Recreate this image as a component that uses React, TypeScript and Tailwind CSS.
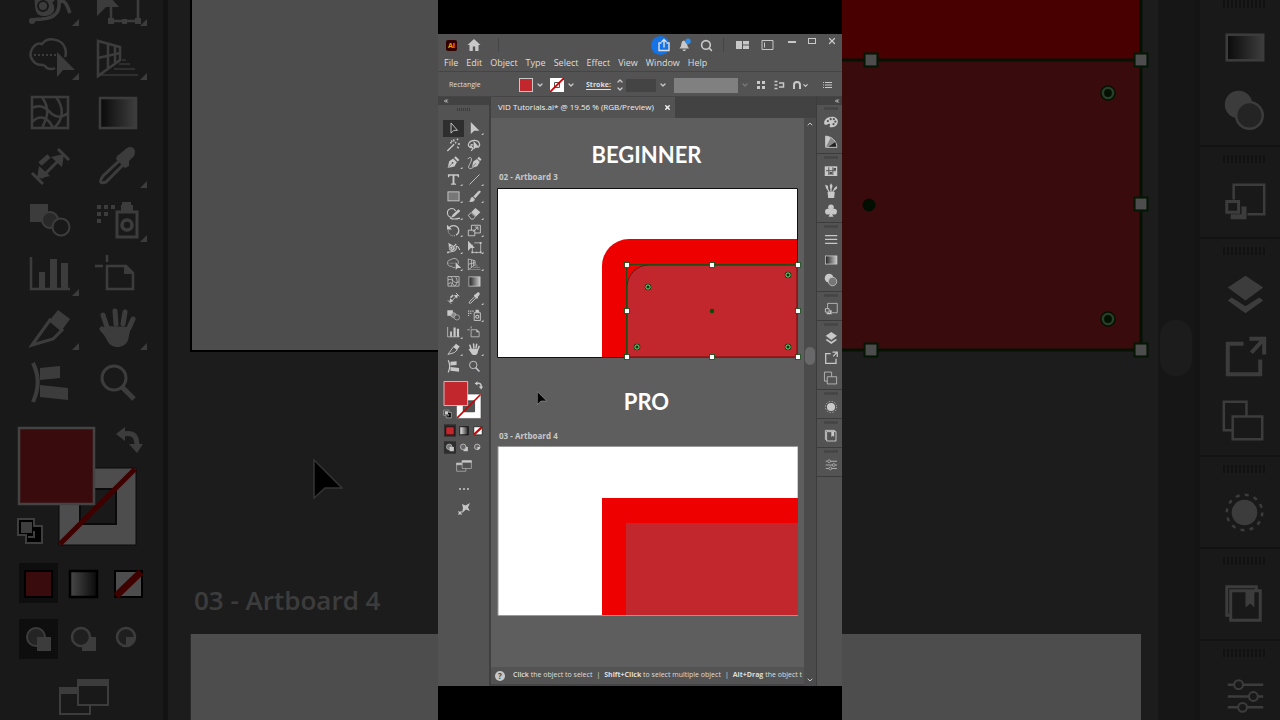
import React, { useId } from "react";
import { ChevronDown, ChevronUp, ChevronsLeft, Search, X } from "lucide-react";
import clsx from "clsx";

type Tool = { name: string; art: React.ReactNode; flyout?: boolean };

const solid = { fill: "currentColor", stroke: "none" };

const GradientRect = ({ x, y, w, h, flip }: { x: number; y: number; w: number; h: number; flip?: boolean }) => {
  const id = useId();
  return (
    <>
      <defs>
        <linearGradient id={id}>
          <stop offset="0" stopColor={flip ? "#eee" : "#222"} />
          <stop offset="1" stopColor={flip ? "#222" : "#ccc"} />
        </linearGradient>
      </defs>
      <rect x={x} y={y} width={w} height={h} fill={`url(#${id})`} stroke={flip ? "#000" : "currentColor"} strokeWidth="2.5" />
    </>
  );
};

const topTools: Tool[] = [
  { name: "Selection", art: <path d="M26 9v33l9-9h12z" strokeWidth="3" /> },
  { name: "Direct Selection", art: <path d="M22 6v39l11-11h17z" {...solid} />, flyout: true },
  { name: "Magic Wand", art: <path d="M14 45l22-22M39 20l4-4M35 7v7M48 22h7M45 9l4-4M27 10l3 5M46 31l5 5M23 18h5" strokeWidth="4.5" /> },
  {
    name: "Lasso",
    art: (
      <>
        <path d="M29 34c-13 1-18-7-13-15 7-11 28-12 33-1 3 5 1 10-2 13M29 26c-7-5-9 3-4 6 5 2 5 7-2 12" strokeWidth="4" />
        <path d="M31 12v29l7-7h12z" {...solid} />
      </>
    ),
  },
  {
    name: "Pen",
    art: (
      <>
        <path d="M15 45l5-22 13-9 12 12-8 14zM36 12l5-5 12 12-5 5z" {...solid} />
        <path d="M16 44l14-14" stroke="#535353" strokeWidth="2" />
        <circle cx="31" cy="28" r="3" fill="#535353" stroke="none" />
      </>
    ),
    flyout: true,
  },
  {
    name: "Curvature",
    art: (
      <>
        <path d="M25 45l5-21 12-8 9 9-8 14zM43 14l5-6 9 9-5 5z" {...solid} />
        <path d="M12 16c8-10 15-5 11 7-4 10-12 20-6 23 5 2 9-1 13-3" strokeWidth="3" />
        <path d="M26 44l13-15" stroke="#535353" />
      </>
    ),
  },
  { name: "Type", art: <path d="M16 10h36v10h-3l-3-5h-9v24l5 2v3H26v-3l5-2V15h-9l-3 5h-3z" {...solid} />, flyout: true },
  { name: "Line Segment", art: <path d="M18 43L50 11" strokeWidth="3" />, flyout: true },
  { name: "Rectangle", art: <rect x="16" y="12" width="36" height="29" fill="#777" strokeWidth="3" />, flyout: true },
  { name: "Paintbrush", art: <path d="M51 8c4 0 4 4 1 7L37 33l-7-6L46 10c2-2 3-2 5-2zM28 29l7 6c0 8-9 12-21 8 6-1 6-4 7-8 1-4 4-6 7-6z" {...solid} />, flyout: true },
  {
    name: "Shaper",
    art: (
      <>
        <path d="M41 19A14 14 0 1 0 28 39M23 42c12 5 25 2 32 0" strokeWidth="3.5" />
        <path d="M27 41l4-10 19-18 6 6-19 18z" {...solid} />
      </>
    ),
    flyout: true,
  },
  {
    name: "Eraser",
    art: (
      <>
        <path d="M14 33l9-9 14 14-7 7h-7z" strokeWidth="3" />
        <path d="M24 22L37 9l16 14-14 14z" {...solid} />
      </>
    ),
    flyout: true,
  },
  {
    name: "Rotate",
    art: (
      <>
        <path d="M20 18c10-12 31-7 31 10 0 7-4 12-9 14" strokeWidth="4" />
        <path d="M38 44c-10 2-21-4-21-17" strokeWidth="3" strokeDasharray="3 4" />
        <path d="M13 8v16h16z" {...solid} />
      </>
    ),
    flyout: true,
  },
  { name: "Scale", art: <path d="M14 26h21v18H14zM24 26V10h29v25H35M29 31l16-15M36 16h9v9" strokeWidth="3" />, flyout: true },
];

const lowerTools: Tool[] = [
  {
    name: "Width",
    art: (
      <>
        <path d="M14 43c5-2 8-2 12-2 15-1 18-9 17-18 8-1 8 6 11 12M27 32l16-17" strokeWidth="3.5" />
        <path d="M17 12l14 8c10 6 10 17-2 18-14 1-8-14-12-26z" {...solid} />
        <circle cx="27" cy="28" r="5" stroke="#535353" />
        <circle cx="16" cy="43" r="3" {...solid} />
      </>
    ),
    flyout: true,
  },
  {
    name: "Free Transform",
    art: (
      <>
        <path d="M27 18v25h27V12H33" strokeWidth="2.5" />
        <path d="M13 5v33l9-9h13zM24 40h6v6h-6zM51 40h6v6h-6zM51 9h6v6h-6zM38 41h5v5h-5z" {...solid} />
      </>
    ),
    flyout: true,
  },
  {
    name: "Shape Builder",
    art: (
      <>
        <path d="M28 33c-11 1-16-9-12-16 3-5 7-6 10-5 6-8 20-5 23 4 1 3 1 7 0 9M28 33c3 4 7 5 11 3" strokeWidth="2.5" />
        <path d="M18 23h24" strokeDasharray="2 2" />
        <path d="M41 20v25l6-7h12z" {...solid} />
      </>
    ),
    flyout: true,
  },
  {
    name: "Perspective Grid",
    art: (
      <>
        <path d="M14 9v35l22-16V15zM24 12v25M31 14v18M14 26l22-5" strokeWidth="2.5" />
        <path d="M14 43h40M30 37h21M35 32h11M38 28h4" opacity=".6" />
      </>
    ),
    flyout: true,
  },
  { name: "Mesh", art: <path d="M16 11h36v31H16zM16 22c10-5 16 2 20 6 5 4 11 3 16-1M26 11c8 12 6 19 0 31M16 36c9-9 17-3 21 6M40 11c8 10 8 22-2 31" strokeWidth="2.5" /> },
  { name: "Gradient", art: <GradientRect x={16} y={12} w={36} h={30} /> },
  {
    name: "Measure",
    art: (
      <>
        <path d="M16 33l11 11M42 9l11 11M25 38l20-20" strokeWidth="3" />
        <path d="M24 24l9-8" strokeWidth="5" />
        <path d="M21 39l2-13 11 10zM48 14l-2 13-11-10z" {...solid} />
      </>
    ),
  },
  {
    name: "Eyedropper",
    art: (
      <>
        <path d="M35 21L19 36c-4 6-3 8 3 6l17-17" strokeWidth="3" />
        <path d="M33 16l4-3 6-5c6-3 10 2 7 8l-5 5v5l-4 2-9-9z" {...solid} />
      </>
    ),
    flyout: true,
  },
  {
    name: "Blend",
    art: (
      <>
        <path d="M14 10h18v18H14z" {...solid} />
        <circle cx="34" cy="26" r="8" fill="#888" />
        <circle cx="45" cy="33" r="8.5" fill="#535353" />
      </>
    ),
  },
  {
    name: "Symbol Sprayer",
    art: (
      <>
        <path d="M33 18h20v25H33z" strokeWidth="3" />
        <circle cx="43" cy="31" r="5" strokeWidth="3.5" />
        <path d="M38 8h9v3h2v6H37v-6h1zM13 11h4v4h-4zM20 11h4v4h-4zM27 11h4v4h-4zM13 18h4v4h-4zM20 18h4v4h-4zM13 25h4v4h-4z" {...solid} />
      </>
    ),
    flyout: true,
  },
  {
    name: "Column Graph",
    art: (
      <>
        <path d="M15 9v32h39" strokeWidth="2.5" />
        <path d="M23 24h6v17h-6zM34 11h7v30h-7zM45 15h7v26h-7z" {...solid} />
      </>
    ),
    flyout: true,
  },
  {
    name: "Artboard",
    art: (
      <>
        <path d="M23 18h19l7 7v16H23zM23 7v7M11 18h8" strokeWidth="2.5" />
        <path d="M40 17v9h10z" {...solid} />
      </>
    ),
  },
  {
    name: "Slice",
    art: (
      <>
        <path d="M16 43l18-25 12 10-9 9z" strokeWidth="3" />
        <path d="M34 18l8-10 12 9-8 11z" {...solid} />
      </>
    ),
    flyout: true,
  },
  {
    name: "Hand",
    art: (
      <>
        <path d="M23 25l-4-12M32 22l-1-13M39 22l2-12M45 26l4-9M28 38L18 27" strokeWidth="5" strokeLinecap="round" />
        <path d="M21 24l26 1-3 13c-3 9-16 9-20 2l-6-11z" {...solid} />
      </>
    ),
    flyout: true,
  },
  {
    name: "Print Tiling",
    art: (
      <>
        <path d="M17 7c6 12 6 26 0 39" strokeWidth="4" />
        <path d="M24 12l20-2v12l-20 2zM24 29l28 3v12l-28-3z" {...solid} />
      </>
    ),
  },
  {
    name: "Zoom",
    art: (
      <>
        <circle cx="30" cy="22" r="12" strokeWidth="3" />
        <path d="M38 31l12 12" strokeWidth="5" />
      </>
    ),
  },
];

const colorPanels: Tool[] = [
  {
    name: "Color",
    art: (
      <>
        <path d="M10 35c0-11 11-20 25-20 11 0 19 6 19 15 0 12-10 19-23 19-4 0-4-4-2-7 2-4-3-6-7-3-7 4-12 2-12-4z" {...solid} />
        <g fill="#535353" stroke="none">
          <circle cx="22" cy="29" r="3.5" />
          <circle cx="31" cy="23" r="3.5" />
          <circle cx="41" cy="23" r="3.5" />
          <circle cx="46" cy="31" r="3.5" />
          <circle cx="40" cy="39" r="3.5" />
        </g>
      </>
    ),
  },
  {
    name: "Color Guide",
    art: (
      <>
        <path d="M15 13c21 2 35 16 36 36H15z" fill="#888" strokeWidth="3" />
        <path d="M15 13l16 5-16 31z" {...solid} />
        <path d="M24 47l22-15 3 15z" fill="#222" stroke="none" />
      </>
    ),
  },
];

const assetPanels: Tool[] = [
  {
    name: "Swatches",
    art: (
      <>
        <path d="M12 17h40v31H12z" {...solid} />
        <path d="M16 31h32M25 20v25M38 20v25" stroke="#535353" strokeWidth="3" />
        <path d="M40 22h8v7h-8zM27 35h9v8h-9z" fill="#535353" stroke="none" />
      </>
    ),
  },
  {
    name: "Brushes",
    art: (
      <>
        <path d="M21 35h23l-2 19H23z" {...solid} />
        <path d="M27 37l-9-17M32 36V20M37 36l9-13" strokeWidth="4" />
        <path d="M13 12l9 3 1 9-6 1zM32 7l5 8-2 9h-6l-1-9zM50 15l2 8-7 6-4-4z" {...solid} />
      </>
    ),
  },
  {
    name: "Symbols",
    art: (
      <>
        <circle cx="32" cy="20" r="9" {...solid} />
        <circle cx="22" cy="34" r="9" {...solid} />
        <circle cx="42" cy="34" r="9" {...solid} />
        <path d="M29 24h6l1 18 4 8H24l4-8z" {...solid} />
      </>
    ),
  },
];

const stylePanels: Tool[] = [
  { name: "Stroke", art: <path d="M13 18h39M13 30h39M13 43h39" strokeWidth="4" /> },
  { name: "Gradient", art: <GradientRect x={14} y={19} w={37} h={26} /> },
  {
    name: "Transparency",
    art: (
      <>
        <circle cx="26" cy="26" r="14" {...solid} />
        <circle cx="37" cy="37" r="13.5" fill="#777" strokeWidth="2.5" />
      </>
    ),
  },
];

const transformPanels: Tool[] = [
  {
    name: "Asset Link",
    art: (
      <>
        <path d="M21 29V14h31v30H35" strokeWidth="2.5" />
        <path d="M14 31h12v11H14z" strokeWidth="3" />
        <path d="M18 44h11V36h5v13H18z" {...solid} />
      </>
    ),
  },
];

const documentPanels: Tool[] = [
  { name: "Layers", art: <path d="M33 13l18 12-18 13-18-13zM15 38l4-3 14 9 14-9 4 3-18 13z" {...solid} /> },
  { name: "Asset Export", art: <path d="M31 18H15v31h33V34M37 13h15v16M51 14L39 27" strokeWidth="4" /> },
  { name: "Artboards", art: <path d="M20 42h-9V13h23v14M20 28h30v23H20z" strokeWidth="2.5" /> },
];

const appearancePanels: Tool[] = [
  {
    name: "Appearance",
    art: (
      <>
        <circle cx="32" cy="32" r="13" {...solid} />
        <circle cx="32" cy="32" r="18" strokeWidth="2.5" strokeDasharray="4 5.4" />
      </>
    ),
  },
];

const libraryPanels: Tool[] = [
  {
    name: "Libraries",
    art: (
      <>
        <path d="M18 43h-4V14h30v4M18 18h30v30H18z" strokeWidth="3" />
        <path d="M33 18h9v17l-4-4-5 4z" {...solid} />
      </>
    ),
  },
];

const propertyPanels: Tool[] = [
  {
    name: "Properties",
    art: (
      <>
        <path d="M15 20h6M30 20h21M15 32h21M46 32h5M15 43h10M34 43h17" strokeWidth="2.5" />
        <circle cx="26" cy="20" r="4.5" />
        <circle cx="41" cy="32" r="4.5" />
        <circle cx="30" cy="43" r="4.5" />
      </>
    ),
  },
];

const ToolGrid = ({ tools, large }: { tools: Tool[]; large?: boolean }) => (
  <div className={clsx("grid", large ? "grid-cols-[68px_68px]" : "grid-cols-[21px_21px]")}>
    {tools.map((tool) => (
      <button
        key={tool.name}
        type="button"
        aria-label={tool.name}
        className={clsx(large ? "h-[54px]" : "h-[17px]", tool.name === "Selection" && "bg-[#2e2e2e]")}
      >
        <svg viewBox="0 0 68 54" className="block h-full w-full" fill="none" stroke="currentColor" strokeWidth="2">
          {tool.art}
          {tool.flyout && <path d="M63 41v7h-7z" {...solid} />}
        </svg>
      </button>
    ))}
  </div>
);

const FillStroke = () => (
  <svg viewBox="0 0 136 130" className="block h-full w-full">
    <path d="M43 48h77v77H43z" fill="#fff" stroke="#222" />
    <path d="M64 69h36v35H64z" fill="#535353" stroke="#222" strokeWidth="2" />
    <path d="M44 124l75-75" stroke="#d00000" strokeWidth="5" />
    <path d="M3 8h75v76H3z" fill="#c1272d" stroke="#ddd" strokeWidth="2.5" />
    <path d="M107 14c12-2 14 3 14 13" fill="none" stroke="currentColor" strokeWidth="5" />
    <path d="M100 14l9-7v14zM113 24h14l-6 9z" fill="currentColor" />
    <path d="M2 99h16v7h8v17H10v-8H2z" fill="#000" stroke="#ccc" strokeWidth="2" />
    <path d="M5 102h11v11H5z" fill="#ccc" />
    <path d="M18 111v6h-6" stroke="#ccc" strokeWidth="2" fill="none" />
  </svg>
);

const colorModes: Tool[] = [
  { name: "Color", art: <path d="M9 9h27v26H9z" fill="#c1272d" stroke="#000" strokeWidth="2" /> },
  { name: "Gradient", art: <GradientRect x={9} y={9} w={27} h={26} flip /> },
  {
    name: "None",
    art: (
      <>
        <path d="M9 9h27v26H9z" fill="#fff" stroke="#000" strokeWidth="2" />
        <path d="M10 34l25-24" stroke="#d00000" strokeWidth="7" />
      </>
    ),
  },
];

const drawModes: Tool[] = [
  {
    name: "Draw Normal",
    art: (
      <>
        <circle cx="20" cy="19" r="9" fill="#777" />
        <path d="M21 19h14v14H21z" {...solid} />
      </>
    ),
  },
  {
    name: "Draw Behind",
    art: (
      <>
        <path d="M21 19h14v14H21z" {...solid} />
        <circle cx="20" cy="19" r="9" fill="#666" strokeWidth="2.5" />
      </>
    ),
  },
  {
    name: "Draw Inside",
    art: (
      <>
        <circle cx="20" cy="19" r="9" fill="#666" strokeWidth="2.5" />
        <path d="M20 19h9c0 5-4 9-9 9z" {...solid} />
      </>
    ),
  },
];

const ModeRow = ({ modes, large }: { modes: Tool[]; large?: boolean }) => (
  <div className="flex">
    {modes.map((mode, i) => (
      <button key={mode.name} type="button" aria-label={mode.name} className={large ? "h-[42px] w-[45px]" : "h-[13px] w-3.5"}>
        <svg viewBox="0 0 45 42" className="block h-full w-full" fill="none" stroke="currentColor" strokeWidth="2">
          {i === 0 && <path d="M3 1h39v40H3z" fill="#2e2e2e" stroke="none" />}
          {mode.art}
        </svg>
      </button>
    ))}
  </div>
);

const ScreenMode = () => (
  <svg viewBox="0 0 52 38" className="block h-full w-full" fill="none" stroke="currentColor" strokeWidth="2">
    <path d="M19 10H2v26h30v-9M20 2h30v25H20z" />
    <path d="M20 2h30v5H20zM2 10h17v5H2z" fill="currentColor" />
  </svg>
);

const PanelGroup = ({ panels, large }: { panels: Tool[]; large?: boolean }) => (
  <div className={clsx("flex flex-col items-center border-[#3c3c3c]", large ? "border-b-2 pb-[3px] pl-2" : "border-b pb-px pl-0.5")}>
    <div className={clsx("flex w-full items-center justify-center", large ? "h-6" : "h-[7px]")}>
      <svg viewBox="0 0 44 8" className={large ? "h-2 w-11" : "h-[3px] w-3.5"} stroke="#383838" strokeWidth="2">
        <path d="M2 0v8M6 0v8M10 0v8M14 0v8M18 0v8M22 0v8M26 0v8M30 0v8M34 0v8M38 0v8M42 0v8" />
      </svg>
    </div>
    {panels.map((panel) => (
      <button key={panel.name} type="button" aria-label={panel.name} className={large ? "size-[63px]" : "size-5"}>
        <svg viewBox="0 0 64 64" className="block h-full w-full" fill="none" stroke="currentColor" strokeWidth="2">
          {panel.art}
        </svg>
      </button>
    ))}
  </div>
);

const Pointer = () => (
  <svg viewBox="0 0 30 42" className="block h-full w-full">
    <path d="M1 2v38l11-10h17z" fill="#000" stroke="#aaa" strokeWidth="1.5" />
  </svg>
);

const Handle = ({ x, y, s }: { x: number; y: number; s: number }) => (
  <rect x={x - s / 2} y={y - s / 2} width={s} height={s} fill="#fff" stroke="#124a12" strokeWidth={s / 6} />
);

const Corner = ({ x, y, r }: { x: number; y: number; r: number }) => (
  <>
    <circle cx={x} cy={y} r={r * 1.3} fill="#0a3a0a" />
    <circle cx={x} cy={y} r={r * 0.85} fill="#0a3a0a" stroke="#8ad08a" strokeWidth={r / 2.5} />
  </>
);

const LeftBackdrop = () => (
  <div aria-hidden="true" className="flex h-full min-w-0 overflow-hidden text-[#c8c8c8] opacity-30">
    <div className="flex w-[168px] shrink-0 flex-col border-r-[5px] border-[#404040] bg-[#535353] pl-4">
      <div className="-mt-[22px]">
        <ToolGrid tools={lowerTools} large />
      </div>
      <div className="mt-2.5 h-[130px] w-[136px]">
        <FillStroke />
      </div>
      <div className="mt-3 flex flex-col gap-3.5">
        <ModeRow modes={colorModes} large />
        <ModeRow modes={drawModes} large />
      </div>
      <div className="mt-[18px] ml-[42px] h-[38px] w-[52px]">
        <ScreenMode />
      </div>
    </div>
    <div className="relative flex min-w-0 flex-1 flex-col bg-[#5e5e5e] pl-[22px]">
      <div className="h-[352px] border-b-2 border-l-2 border-black bg-white" />
      <p className="mt-[230px] pl-1 text-[26px] leading-9 font-semibold whitespace-nowrap">03 - Artboard 4</p>
      <div className="mt-4 flex-1 border-l border-[#888] bg-white" />
      <div className="absolute top-[458px] left-[145px] h-[42px] w-[30px]">
        <Pointer />
      </div>
    </div>
  </div>
);

const RightBackdrop = () => (
  <div aria-hidden="true" className="flex h-full min-w-0 justify-end overflow-hidden text-[#c8c8c8] opacity-30">
    <div className="flex min-w-0 flex-1 flex-col bg-[#5e5e5e]">
      <svg viewBox="0 0 316 358" className="block h-[358px] w-[316px] shrink-0">
        <path d="M0 0h299v60H0z" fill="#ee0000" />
        <path d="M0 60h299v290H0z" fill="#c1272d" />
        <path d="M0 60h299v290H0M299 0v60" fill="none" stroke="#123a08" strokeWidth="3" />
        <Handle x={29} y={60} s={13} />
        <Handle x={299} y={60} s={13} />
        <Handle x={299} y={204} s={13} />
        <Handle x={29} y={350} s={13} />
        <Handle x={299} y={350} s={13} />
        <Corner x={266} y={93} r={6} />
        <Corner x={266} y={319} r={6} />
        <circle cx="27" cy="205" r="6.5" fill="#063006" />
      </svg>
      <div className="mt-[276px] mr-[17px] flex-1 bg-white" />
    </div>
    <div className="flex w-[42px] shrink-0 flex-col border-r-[6px] border-[#424242] bg-[#4b4b4b]">
      <div className="mx-0.5 mt-80 h-14 rounded-2xl bg-[#5e5e5e]" />
    </div>
    <div className="w-20 shrink-0 bg-[#535353]">
      <div className="-mt-2">
        <PanelGroup panels={stylePanels.slice(1)} large />
      </div>
      <PanelGroup panels={transformPanels} large />
      <PanelGroup panels={documentPanels} large />
      <PanelGroup panels={appearancePanels} large />
      <PanelGroup panels={libraryPanels} large />
      <PanelGroup panels={propertyPanels} large />
    </div>
  </div>
);

const TitleBar = () => (
  <header className="flex h-[22px] shrink-0 items-center">
    <span className="ml-2 flex size-[11px] items-center justify-center rounded-xs bg-[#330000] text-[7px] leading-none font-bold text-[#ff9a00]">Ai</span>
    <button type="button" aria-label="Home" className="ml-2.5">
      <svg viewBox="0 0 14 14" className="block size-3.5" fill="currentColor">
        <path d="M7 1L0.5 7h2v6h3.3V8.5h2.4V13h3.3V7h2z" />
      </svg>
    </button>
    <span className="ml-[17px] h-3.5 w-px bg-[#454545]" />
    <div className="flex-1" />
    <button type="button" aria-label="Share" className="flex size-[19px] items-center justify-center rounded-full bg-[#1473e6] pl-1.5 text-[#dedede]">
      <svg viewBox="0 0 14 14" className="block h-3.5 w-3.5 shrink-0" fill="none" stroke="currentColor" strokeWidth="1.4">
        <path d="M4.500 5H2v7.500h10V5H9.500M7 9.500V2M4.500 4L7 1.500 9.500 4" />
      </svg>
    </button>
    <button type="button" aria-label="Notifications" className="ml-2">
      <svg viewBox="0 0 14 14" className="block size-3.5" fill="currentColor">
        <path d="M6 2.5c-2.5.5-2.5 3-3 5.5L1.500 10.500h9.500L9.500 8 9 5zM4.500 11.500h3.500c-.5 2-3 2-3.500 0z" />
        <circle cx="10" cy="3.200" r="2.800" fill="#2d8ceb" />
      </svg>
    </button>
    <button type="button" aria-label="Search" className="ml-2">
      <Search className="size-[13px]" strokeWidth={3} />
    </button>
    <span className="ml-2.5 h-3.5 w-px bg-[#454545]" />
    <button type="button" aria-label="Arrange Documents" className="ml-3">
      <svg viewBox="0 0 13 10" className="block h-2.5 w-[13px]" fill="currentColor">
        <path d="M0 1h6v8H0zM7 1h6v3.500H7zM7 5.500h6V9H7z" />
      </svg>
    </button>
    <button type="button" aria-label="Workspace" className="ml-3">
      <svg viewBox="0 0 13 10" className="block h-2.5 w-[13px]" fill="none" stroke="currentColor">
        <path d="M1 .5h11v9H1zM3.500 2.500v5" />
      </svg>
    </button>
    <div className="ml-3 flex gap-2 self-start pr-1">
      <button type="button" aria-label="Minimize" className="flex h-4 w-3 items-center justify-center">
        <span className="h-0.5 w-2 bg-[#c8c8c8]" />
      </button>
      <button type="button" aria-label="Maximize" className="flex h-3.5 w-3 items-center justify-center">
        <span className="h-1.5 w-2 border border-[#c8c8c8]" />
      </button>
      <button type="button" aria-label="Close" className="flex h-3.5 w-3 items-center justify-center">
        <X className="size-2.5" strokeWidth={3} />
      </button>
    </div>
  </header>
);

const menus = ["File", "Edit", "Object", "Type", "Select", "Effect", "View", "Window", "Help"];

const MenuBar = () => (
  <nav className="flex h-4 shrink-0 items-center gap-2 border-b border-[#454545] pb-0.5 pl-1.5 text-[9px] leading-3 text-[#dedede]">
    {menus.map((menu) => (
      <button key={menu} type="button">
        {menu}
      </button>
    ))}
  </nav>
);

const Chevron = ({ label, dim }: { label: string; dim?: boolean }) => (
  <button type="button" aria-label={label} className={clsx("flex w-3.5 shrink-0 justify-center", dim && "text-[#777]")}>
    <ChevronDown className="size-2" strokeWidth={4} />
  </button>
);

const ControlBar = () => (
  <div className="flex h-[25px] shrink-0 items-center border-b border-[#454545] pt-0.5 text-[7px]">
    <span className="w-[81px] shrink-0 pl-[11px] text-[#dedede]">Rectangle</span>
    <button type="button" aria-label="Fill" className="size-3.5 shrink-0 border border-[#c8c8c8] bg-[#c1272d]" />
    <Chevron label="Fill options" />
    <button type="button" aria-label="No stroke" className="ml-[3px] size-3.5 shrink-0">
      <svg viewBox="0 0 14 14" className="block size-3.5">
        <path d="M0 0h14v14H0z" fill="#fff" />
        <path d="M4.500 4.500h5v5h-5z" fill="#fff" stroke="#555" />
        <path d="M0 14L14 0" stroke="#d00000" strokeWidth="1.800" />
      </svg>
    </button>
    <Chevron label="Stroke options" />
    <label htmlFor="stroke-width" className="ml-2 w-7 shrink-0 font-bold text-[#dedede] underline underline-offset-2">
      Stroke:
    </label>
    <div className="flex w-3 shrink-0 flex-col items-center">
      <button type="button" aria-label="Increase stroke">
        <ChevronUp className="block size-2" strokeWidth={4} />
      </button>
      <button type="button" aria-label="Decrease stroke">
        <ChevronDown className="block size-2" strokeWidth={4} />
      </button>
    </div>
    <input id="stroke-width" className="h-[13px] w-[30px] min-w-0 bg-[#444]" />
    <Chevron label="Stroke presets" />
    <select aria-label="Variable width profile" className="ml-1 h-[15px] w-16 appearance-none bg-[#808080]" />
    <Chevron label="Profile options" dim />
    <div className="flex flex-1 items-center justify-between pr-2.5 pl-1">
      <button type="button" aria-label="Align">
        <svg viewBox="0 0 10 10" className="block size-2.5" fill="currentColor">
          <path d="M1 1h3v3H1zM6 1h3v3H6zM1 6h3v3H1zM6 6h3v3H6z" />
        </svg>
      </button>
      <button type="button" aria-label="Shape properties">
        <svg viewBox="0 0 11 10" className="block h-2.5 w-[11px]" fill="none" stroke="currentColor" strokeWidth="1.500">
          <path d="M.5 1.500h3M.5 5h3M.5 8.500h3M5 3h4.500v4H5" />
        </svg>
      </button>
      <button type="button" aria-label="Snap" className="flex items-center">
        <svg viewBox="0 0 10 10" className="block size-2.5" fill="none" stroke="currentColor" strokeWidth="2">
          <path d="M2 9V5a3 3 0 0 1 6 0v4" />
        </svg>
        <ChevronDown className="size-[7px]" strokeWidth={4} />
      </button>
      <button type="button" aria-label="Panel menu" className="ml-1.5">
        <svg viewBox="0 0 9 8" className="block h-2 w-[9px]" stroke="currentColor">
          <path d="M0 1.500h1M2 1.500h7M0 4h1M2 4h7M0 6.500h1M2 6.500h7" />
        </svg>
      </button>
    </div>
  </div>
);

const ToolPanel = () => (
  <aside className="flex w-[53px] shrink-0 flex-col border-r-2 border-[#404040] bg-[#535353]">
    <div className="flex h-2 items-center bg-[#424242] pl-[5px]">
      <ChevronsLeft className="size-1.5" strokeWidth={4} />
    </div>
    <svg viewBox="0 0 16 3" className="mx-auto mt-[3px] h-[3px] w-4" stroke="#3c3c3c">
      <path d="M1.500 0v3M3.500 0v3M5.500 0v3M7.500 0v3M9.500 0v3M11.500 0v3M13.500 0v3" />
    </svg>
    <div className="pt-[9px] pl-[5px]">
      <ToolGrid tools={topTools} />
      <ToolGrid tools={lowerTools} />
      <div className="mt-1 h-[41px] w-[43px]">
        <FillStroke />
      </div>
      <div className="mt-1 flex flex-col gap-1">
        <ModeRow modes={colorModes} />
        <ModeRow modes={drawModes} />
      </div>
    </div>
    <div className="flex flex-col items-center pt-1.5">
      <button type="button" aria-label="Screen mode" className="h-3 w-4">
        <ScreenMode />
      </button>
      <button type="button" aria-label="Edit toolbar" className="mt-[9px] h-4 w-3.5">
        <svg viewBox="0 0 14 16" className="block h-4 w-3.5" fill="currentColor">
          <circle cx="3" cy="8" r="1" />
          <circle cx="7" cy="8" r="1" />
          <circle cx="11" cy="8" r="1" />
        </svg>
      </button>
      <button type="button" aria-label="Generate" className="mt-1 h-4 w-3.5">
        <svg viewBox="0 0 14 16" className="block h-4 w-3.5" fill="currentColor">
          <path d="M5 3l3.500 1.500L13 2l-2 4.500L13 10 9 8.500 5 12l1-5zM1 10l2 .8 2-.8-.8 2L5 14l-2-.8-2 .8.8-2z" />
        </svg>
      </button>
    </div>
  </aside>
);

const PanelDock = () => (
  <aside className="w-[26px] shrink-0 border-l border-[#3c3c3c] bg-[#535353]">
    <div className="flex h-2 items-center justify-end bg-[#424242] pr-0.5">
      <ChevronsLeft className="size-1.5" strokeWidth={4} />
    </div>
    <PanelGroup panels={colorPanels} />
    <PanelGroup panels={assetPanels} />
    <PanelGroup panels={stylePanels} />
    <PanelGroup panels={transformPanels} />
    <PanelGroup panels={documentPanels} />
    <PanelGroup panels={appearancePanels} />
    <PanelGroup panels={libraryPanels} />
    <PanelGroup panels={propertyPanels} />
  </aside>
);

const Canvas = () => (
  <main className="relative flex min-w-0 flex-1 flex-col bg-[#5e5e5e] pl-1.5">
    <h2 className="mt-[21px] pr-2 text-center font-['Lato','Open_Sans',sans-serif] text-[22px] leading-8 font-bold text-white">BEGINNER</h2>
    <p className="pl-0.5 text-[8px] leading-3 font-bold">02 - Artboard 3</p>
    <svg viewBox="0 0 306 176" className="mt-[3px] block h-44 w-[306px] shrink-0">
      <path d="M.5 2.500h300v169H.5z" fill="#fff" stroke="#111" />
      <path d="M105 171V81a27 27 0 0 1 27-28h168v118z" fill="#ee0000" />
      <path d="M130 171v-70a22 22 0 0 1 22-22h148v92z" fill="#c1272d" stroke="#6b1010" />
      <path d="M129.500 78.500h171v93h-171z" fill="none" stroke="#234a14" />
      {[79, 125, 171].map((y) =>
        [130, 215, 301].map((x) => (x === 215 && y === 125 ? null : <Handle key={`${x}-${y}`} x={x} y={y} s={5} />))
      )}
      <Corner x={151} y={101} r={2.5} />
      <Corner x={291} y={89} r={2.5} />
      <Corner x={140} y={161} r={2.5} />
      <Corner x={291} y={161} r={2.5} />
      <circle cx="215" cy="125" r="2.200" fill="#0a4a0a" />
    </svg>
    <h2 className="mt-6 pr-2 text-center font-['Lato','Open_Sans',sans-serif] text-[22px] leading-8 font-bold text-white">PRO</h2>
    <p className="mt-3 pl-0.5 text-[8px] leading-3 font-bold">03 - Artboard 4</p>
    <svg viewBox="0 0 301 170" className="mt-1 block h-[170px] w-[301px] shrink-0">
      <path d="M1 .5h300v169H1z" fill="#fff" stroke="#999" />
      <path d="M105 52h196v117H105z" fill="#ee0000" />
      <path d="M129 77h172v92H129z" fill="#c1272d" />
    </svg>
    <div className="absolute top-[273px] left-[46px] h-3.5 w-2.5">
      <Pointer />
    </div>
  </main>
);

const StatusBar = () => (
  <footer className="flex h-[19px] shrink-0 items-center border-b-2 border-[#454545] bg-[#535353] pl-1 text-[7px] whitespace-nowrap text-[#dedede]">
    <span className="flex size-2.5 shrink-0 items-center justify-center rounded-full bg-[#c8c8c8] text-[8px] leading-none font-bold text-[#444]">?</span>
    <p className="ml-2 flex gap-1">
      <span>
        <b className="font-semibold">Click</b> the object to select
      </span>
      <span>|</span>
      <span>
        <b>Shift+Click</b> to select multiple object
      </span>
      <span>|</span>
      <span>
        <b>Alt+Drag</b> the object t
      </span>
    </p>
  </footer>
);

const Illustrator = () => (
  <div className="flex h-full flex-col overflow-hidden bg-[#535353] text-[#c8c8c8]">
    <TitleBar />
    <MenuBar />
    <ControlBar />
    <div className="flex min-h-0 flex-1">
      <ToolPanel />
      <div className="flex min-w-0 flex-1 flex-col bg-[#424242]">
        <div className="flex h-[21px] w-[184px] shrink-0 items-center justify-between bg-[#535353] pr-1 pb-px pl-[7px] text-[8px] font-medium whitespace-nowrap text-[#f0f0f0]">
          <span>VID Tutorials.ai* @ 19.56 % (RGB/Preview)</span>
          <button type="button" aria-label="Close document">
            <X className="size-[7px]" strokeWidth={5} />
          </button>
        </div>
        <div className="flex min-h-0 flex-1">
          <div className="flex min-w-0 flex-1 flex-col">
            <Canvas />
            <StatusBar />
          </div>
          <div className="flex w-3 shrink-0 flex-col items-center justify-between bg-[#4b4b4b] py-0.5">
            <ChevronUp className="size-2" strokeWidth={3} />
            <div className="-mt-[92px] h-[18px] w-2.5 rounded-full bg-[#686868]" />
            <ChevronDown className="size-2" strokeWidth={3} />
          </div>
        </div>
      </div>
      <PanelDock />
    </div>
  </div>
);

const App = () => (
  <div className="grid h-screen grid-cols-[minmax(0,1fr)_404px_minmax(0,1fr)] grid-rows-[minmax(0,1fr)] overflow-hidden bg-black font-['Open_Sans','Noto_Sans',sans-serif]">
    <LeftBackdrop />
    <div className="h-full min-h-0 py-[34px]">
      <Illustrator />
    </div>
    <RightBackdrop />
  </div>
);

export default App;
